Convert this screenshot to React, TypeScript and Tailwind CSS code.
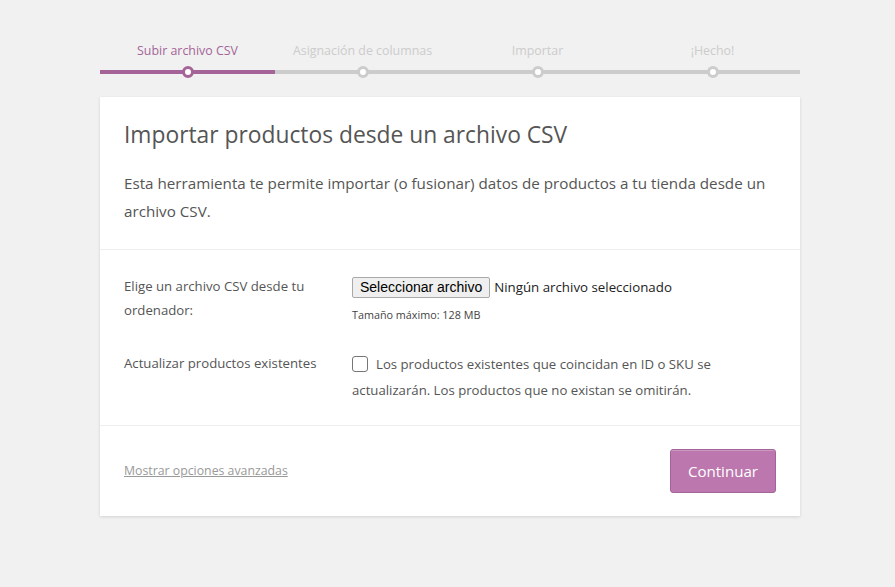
import React from 'react';

const steps = ['Subir archivo CSV', 'Asignación de columnas', 'Importar', '¡Hecho!'];

const App: React.FC = () => {
  return (
    <div className="min-h-[587px] bg-[#f1f1f1] pt-[41px] font-['Open_Sans',sans-serif] text-[#555]">
      {/* steps */}
      <ol className="ml-[100px] flex w-[700px]">
        {steps.map((s, i) => (
          <li key={s} className="flex flex-1 flex-col items-center">
            <span className={`text-[12.4px] leading-[20px] ${i === 0 ? 'text-[#a46497]' : 'text-[#ccc]'}`}>{s}</span>
            <div className={`relative mt-[9px] h-[4px] w-full ${i === 0 ? 'bg-[#a46497]' : 'bg-[#ccc]'}`}>
              <span
                className={`absolute left-1/2 top-1/2 h-[12px] w-[12px] -translate-x-1/2 -translate-y-1/2 rounded-full border-[3px] bg-white ${
                  i === 0 ? 'border-[#a46497]' : 'border-[#ccc]'
                }`}
              />
            </div>
          </li>
        ))}
      </ol>

      {/* card */}
      <div className="ml-[100px] mt-[23px] w-[700px] bg-white shadow-[0_1px_3px_rgba(0,0,0,0.13)]">
        <header className="border-b border-[#eee] px-[24px] pb-[24px] pt-[22px]">
          <h1 className="text-[22.8px] font-normal leading-[32px] text-[#555]">Importar productos desde un archivo CSV</h1>
          <p className="mt-[18px] text-[15.2px] leading-[28px] text-[#555]">
            Esta herramienta te permite importar (o fusionar) datos de productos a tu tienda desde un archivo CSV.
          </p>
        </header>

        <section className="border-b border-[#eee] px-[24px] pb-[22px] pt-[24px] text-[13.2px]">
          <div className="flex">
            <label className="w-[228px] pr-[16px] leading-[24px]">Elige un archivo CSV desde tu ordenador:</label>
            <div className="pt-[3px]">
              <div className="flex items-center">
                <button className="h-[21px] rounded-[2px] border border-[#a9a9a9] bg-[#efefef] px-[7px] font-['Liberation_Sans',sans-serif] text-[14px] leading-[19px] text-black">
                  Seleccionar archivo
                </button>
                <span className="ml-[4px] text-[13.3px] text-[#222]">Ningún archivo seleccionado</span>
              </div>
              <p className="mt-[9px] text-[10.8px] leading-[16px] text-[#444]">Tamaño máximo: 128 MB</p>
            </div>
          </div>
          <div className="mt-[28px] flex">
            <label className="w-[228px] shrink-0 pr-[16px] leading-[24px]">Actualizar productos existentes</label>
            <p className="leading-[26px]">
              <span className="mr-[8px] inline-block h-[16px] w-[16px] translate-y-[3px] rounded-[3px] border border-[#767676] bg-white" />
              Los productos existentes que coincidan en ID o SKU se actualizarán. Los productos que no existan se omitirán.
            </p>
          </div>
        </section>

        <footer className="flex items-center justify-between px-[24px] py-[23px]">
          <a className="text-[12.3px] text-[#999] underline">Mostrar opciones avanzadas</a>
          <button className="h-[44px] rounded-[3px] border border-[#a36597] bg-[#bb77ae] px-[17px] text-[15.1px] text-white shadow-[inset_0_1px_0_rgba(255,255,255,0.25)]">
            Continuar
          </button>
        </footer>
      </div>
    </div>
  );
};

export default App;
